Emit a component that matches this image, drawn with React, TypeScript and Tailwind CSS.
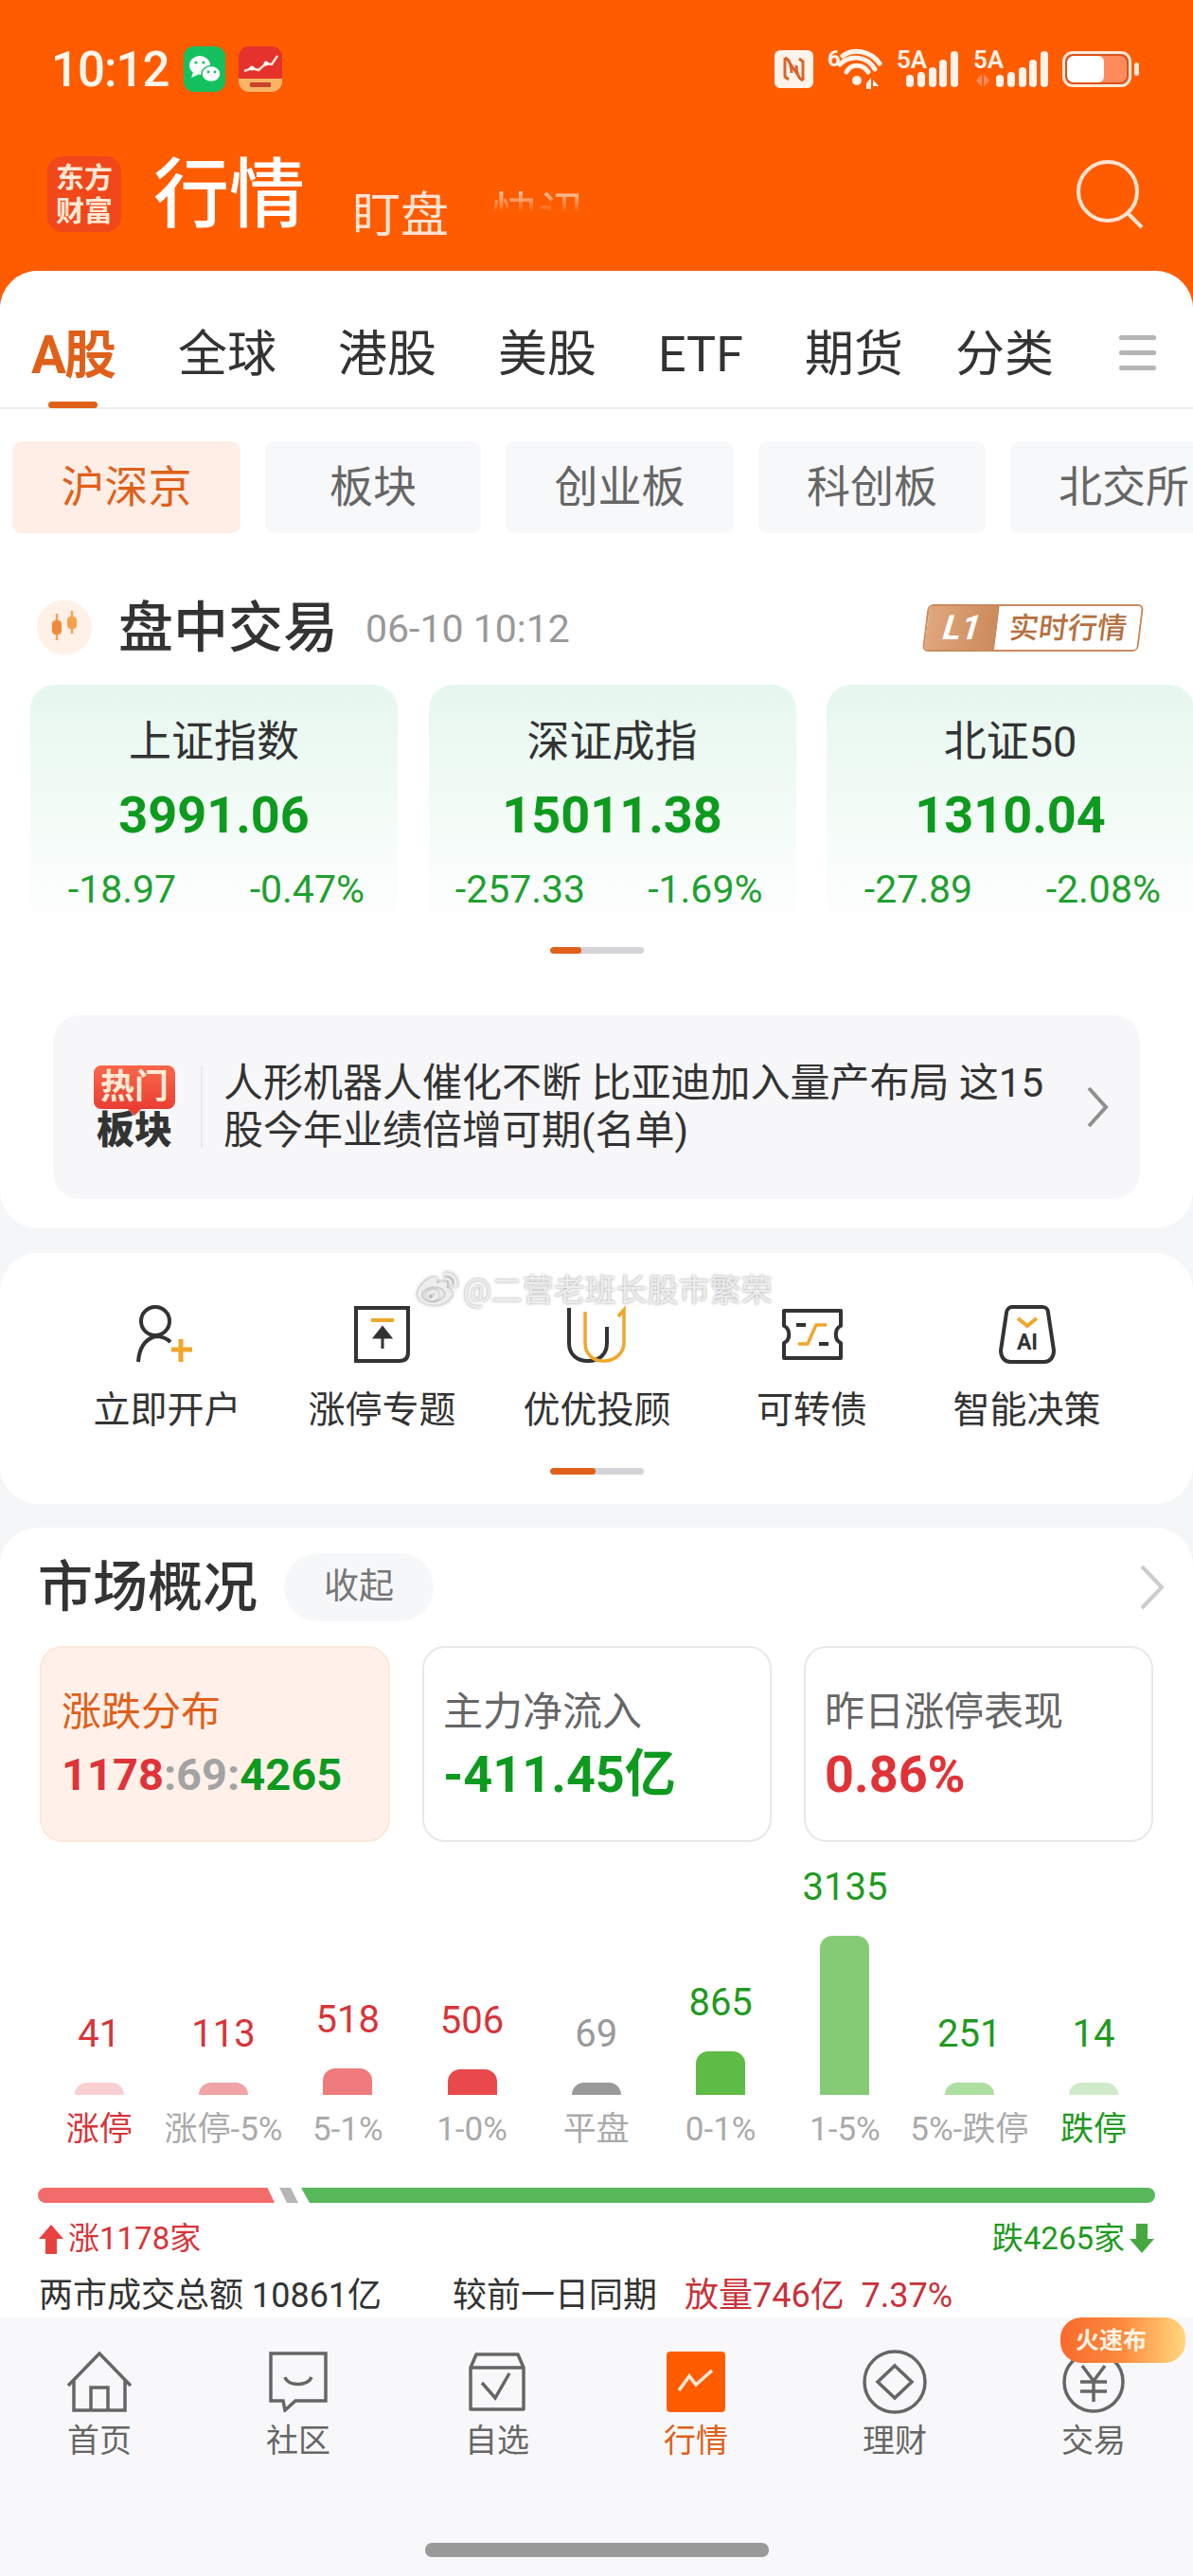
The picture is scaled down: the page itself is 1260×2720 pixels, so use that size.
import { FaWeibo } from 'react-icons/fa';

const tabs = ['全球', '港股', '美股', 'ETF', '期货'];

const chips = [
  { label: '板块', w: 'w-[228px]' },
  { label: '创业板', w: 'w-[241px]' },
  { label: '科创板', w: 'w-[240px]' },
  { label: '北交所', w: 'w-[240px]' },
];

const indices = [
  { name: '上证指数', value: '3991.06', diff: '-18.97', pct: '-0.47%' },
  { name: '深证成指', value: '15011.38', diff: '-257.33', pct: '-1.69%' },
  { name: '北证50', value: '1310.04', diff: '-27.89', pct: '-2.08%' },
];

const chart = [
  { n: '41', label: '涨停', h: 'h-[13px]', bar: 'bg-[#F9D0D2]', numC: 'text-[#D8343A]', labelC: 'text-[#D8343A]' },
  { n: '113', label: '涨停-5%', h: 'h-[13px]', bar: 'bg-[#F0A4A6]', numC: 'text-[#D8343A]', labelC: 'text-[#AAAAAA]' },
  { n: '518', label: '5-1%', h: 'h-[28px]', bar: 'bg-[#EF7B7E]', numC: 'text-[#D8343A]', labelC: 'text-[#AAAAAA]' },
  { n: '506', label: '1-0%', h: 'h-[27px]', bar: 'bg-[#E84A4C]', numC: 'text-[#D8343A]', labelC: 'text-[#AAAAAA]' },
  { n: '69', label: '平盘', h: 'h-[13px]', bar: 'bg-[#999999]', numC: 'text-[#999999]', labelC: 'text-[#AAAAAA]' },
  { n: '865', label: '0-1%', h: 'h-[46px]', bar: 'bg-[#5DBB46]', numC: 'text-[#1F9A1F]', labelC: 'text-[#AAAAAA]' },
  { n: '3135', label: '1-5%', h: 'h-[168px]', bar: 'bg-[#85CB76]', numC: 'text-[#1F9A1F]', labelC: 'text-[#AAAAAA]' },
  { n: '251', label: '5%-跌停', h: 'h-[13px]', bar: 'bg-[#AEDFA2]', numC: 'text-[#1F9A1F]', labelC: 'text-[#AAAAAA]' },
  { n: '14', label: '跌停', h: 'h-[13px]', bar: 'bg-[#D0EBC9]', numC: 'text-[#1F9A1F]', labelC: 'text-[#1F9A1F]' },
];

function Signal({ faded }: { faded?: boolean }) {
  const dx = faded ? 14 : 0;
  return (
    <svg className="overflow-visible" width={faded ? 79 : 65} height="40" viewBox={`0 0 ${faded ? 79 : 65} 40`}>
      <text x="0" y="19" fontSize="26" fontWeight="600" fill="#FFF3EA" fontFamily="Roboto, sans-serif">5A</text>
      {faded && <path d="M3 32l6-7v14zM11 25l6 7-6 7z" fill="#FF8A5C" />}
      <g fill="#FFF3EA" transform={`translate(${dx} 0)`}>
        <rect x="10" y="26" width="8" height="13" rx="4" />
        <rect x="22" y="23" width="8" height="16" rx="4" />
        <rect x="34" y="18" width="8" height="21" rx="4" />
        <rect x="45" y="10" width="8" height="29" rx="4" />
        <rect x="57" y="1" width="8" height="38" rx="4" />
      </g>
    </svg>
  );
}

function StatusBar() {
  return (
    <div className="h-[146px] pl-[54px] pr-[57px] flex items-center">
      <span className="text-[51px] font-medium text-[#FFF6EE] tracking-[-1px] leading-none">10:12</span>
      <svg className="ml-[16px]" width="44" height="48" viewBox="0 0 44 48">
        <rect width="44" height="48" rx="11" fill="#15C15F" />
        <ellipse cx="17" cy="20" rx="11" ry="10" fill="#fff" />
        <path d="M10 27l-2 6 7-3z" fill="#fff" />
        <ellipse cx="29" cy="29" rx="10" ry="8.5" fill="#fff" stroke="#15C15F" strokeWidth="1.5" />
        <circle cx="13" cy="17" r="1.6" fill="#15C15F" />
        <circle cx="21" cy="17" r="1.6" fill="#15C15F" />
        <circle cx="26" cy="27" r="1.4" fill="#15C15F" />
        <circle cx="33" cy="27" r="1.4" fill="#15C15F" />
      </svg>
      <svg className="ml-[14px]" width="46" height="48" viewBox="0 0 46 48">
        <rect width="46" height="48" rx="11" fill="#E5322D" />
        <path d="M0 34h46v3a11 11 0 0 1-11 11H11A11 11 0 0 1 0 37z" fill="#F9B465" />
        <path d="M6 26l8-3 7 2 8-7 6 1 6-9" stroke="#FFE7D2" strokeWidth="2.5" fill="none" />
        <circle cx="14" cy="23" r="2.5" fill="#fff" />
        <circle cx="29" cy="18" r="2.5" fill="#fff" />
        <rect x="12" y="38" width="22" height="5" rx="1" fill="#C8432A" />
      </svg>
      <div className="flex-1" />
      <svg width="41" height="40" viewBox="0 0 41 40">
        <rect width="41" height="40" rx="6" fill="#FFF3EA" />
        <path d="M11 8c5 2 7 8 7 16M30 32c-5-2-7-8-7-16M11 8v20l4 3M30 32V12l-4-3M15 12l11 16" stroke="#D9642B" strokeWidth="3" fill="none" />
      </svg>
      <svg className="ml-[14px] overflow-visible" width="59" height="42" viewBox="0 0 59 42">
        <text x="1" y="18" fontSize="24" fontWeight="700" fill="#FFF3EA" fontFamily="Roboto, sans-serif">6</text>
        <path d="M17 7C28 -1 46 1 56 15M14 16C24 6 42 6 51 21M21 24C26 15 38 15 44 24" stroke="#FFF3EA" strokeWidth="5" fill="none" strokeLinecap="round" />
        <circle cx="32" cy="33" r="5" fill="#FFF3EA" />
        <path d="M42 36l5-6v12h-5zM49 32l6 7h-6z" fill="#FFF3EA" />
      </svg>
      <div className="ml-[15px] flex">
        <Signal />
      </div>
      <div className="ml-[16px] flex">
        <Signal faded />
      </div>
      <div className="ml-[15px] flex items-center">
        <div className="w-[73px] h-[38px] rounded-[11px] border-[3px] border-[#FFE9D8] p-[2px] bg-[#D9541A]">
          <div className="w-full h-full rounded-[7px] bg-[#FF8A5C] overflow-hidden">
            <div className="w-[62%] h-full rounded-[6px] bg-white" />
          </div>
        </div>
        <div className="ml-[3px] w-[5px] h-[14px] rounded-[3px] bg-[#FFE9D8]" />
      </div>
    </div>
  );
}

function Header() {
  return (
    <div className="h-[286px] shrink-0 bg-[#FF5C00]">
      <StatusBar />
      <div className="h-[118px] pl-[50px] pr-[50px] flex items-center">
        <div className="w-[78px] h-[80px] rounded-[16px] bg-[#F0481A] flex flex-col items-center justify-center text-[30px] leading-[35px] font-bold text-[#FFE8D6]">
          <span>东方</span>
          <span>财富</span>
        </div>
        <span className="ml-[34px] mt-[2px] text-[80px] leading-none font-medium text-white">行情</span>
        <span className="ml-[50px] mt-[44px] text-[51px] leading-none text-[#FFE3D2]">盯盘</span>
        <span className="ml-[45px] mt-[44px] text-[50px] leading-none text-[#FFE3D2] [mask-image:linear-gradient(to_bottom,rgba(0,0,0,0.8),transparent_45%)]">快讯</span>
        <div className="flex-1" />
        <svg width="74" height="74" viewBox="0 0 74 74">
          <circle cx="34" cy="34" r="31" stroke="#FFE3D2" strokeWidth="4" fill="none" />
          <path d="M54 56l16 16" stroke="#FFE3D2" strokeWidth="4" fill="none" />
        </svg>
      </div>
    </div>
  );
}

function Tabs() {
  return (
    <div className="h-[146px] border-b-2 border-[#EEEEEE] pl-[33px] pt-[34px] flex items-center text-[52px] leading-none text-[#333333]">
      <span className="relative text-[55px] text-[#E0601A] font-bold tracking-[-2px] w-[90px]">
        A股
        <span className="absolute left-[18px] top-[76px] w-[52px] h-[7px] rounded-[4px] bg-[#E0601A]" />
      </span>
      {tabs.map((t) => (
        <span key={t} className="ml-[65px]">
          {t}
        </span>
      ))}
      <span className="ml-[55px]">分类</span>
      <div className="ml-[69px] -mt-[6px] w-[39px] flex flex-col gap-[11px]">
        <div className="h-[5px] bg-[#B5B5B5] rounded-[2px]" />
        <div className="h-[5px] bg-[#B5B5B5] rounded-[2px]" />
        <div className="h-[5px] bg-[#B5B5B5] rounded-[2px]" />
      </div>
    </div>
  );
}

function Chips() {
  return (
    <div className="mt-[34px] h-[97px] pl-[13px] flex gap-[26px] overflow-hidden text-[46px]">
      <div className="w-[241px] shrink-0 rounded-[10px] bg-[#FFEEE6] text-[#E0601A] flex items-center justify-center">沪深京</div>
      {chips.map((c) => (
        <div key={c.label} className={`${c.w} shrink-0 rounded-[10px] bg-[#F7F8FA] text-[#666666] flex items-center justify-center`}>
          {c.label}
        </div>
      ))}
    </div>
  );
}

function SectionTitle() {
  return (
    <div className="mt-[70px] h-[59px] pl-[39px] pr-[55px] flex items-center">
      <svg width="58" height="59" viewBox="0 0 58 59">
        <circle cx="29" cy="29.5" r="29" fill="#FFF0E8" />
        <path d="M21 15v28M37 12v24" stroke="#F5A14D" strokeWidth="2.5" />
        <rect x="16" y="22" width="10" height="15" rx="4" fill="#F08A3C" />
        <rect x="32" y="18" width="10" height="13" rx="4" fill="#F5A14D" />
      </svg>
      <span className="ml-[28px] text-[58px] leading-none font-medium text-[#333333]">盘中交易</span>
      <span className="ml-[29px] mt-[4px] text-[41px] leading-none text-[#999999]">06-10 10:12</span>
      <div className="flex-1" />
      <div className="w-[228px] h-[50px] flex -skew-x-[7deg] rounded-[6px] border-2 border-[#C98A5E] overflow-hidden">
        <div className="w-[74px] bg-gradient-to-r from-[#E0A77C] to-[#CB8A5C] flex items-center justify-center text-[36px] font-bold italic text-white leading-none">L1</div>
        <div className="flex-1 bg-white flex items-center justify-center text-[31px] font-medium text-[#B5713F] leading-none">实时行情</div>
      </div>
    </div>
  );
}

function IndexCards() {
  return (
    <div className="mt-[31px] pl-[32px] flex gap-[32.5px] overflow-hidden">
      {indices.map((x) => (
        <div key={x.name} className="w-[388px] h-[259px] shrink-0 rounded-[26px] bg-gradient-to-b from-[#E6F7EE] to-white pt-[39px] flex flex-col">
          <div className="text-center text-[45px] leading-[44px] text-[#333333]">{x.name}</div>
          <div className="mt-[28px] text-center text-[54px] leading-[54px] font-bold text-[#0E9A1E]">{x.value}</div>
          <div className="mt-[29px] flex text-[41px] leading-[44px] text-[#1FA030]">
            <span className="w-[194px] text-center">{x.diff}</span>
            <span className="flex-1 text-right pr-[35px]">{x.pct}</span>
          </div>
        </div>
      ))}
    </div>
  );
}

function Pager({ on }: { on: string }) {
  return (
    <div className="w-[99px] h-[7px] mx-auto rounded-[4px] bg-[#D4D4D8] overflow-hidden">
      <div className={`${on} h-full rounded-[4px] bg-[#E0601A]`} />
    </div>
  );
}

function News() {
  return (
    <div className="mt-[65px] mx-[56px] h-[194px] rounded-[28px] bg-[#F7F7F9] pl-[42px] pr-[33px] flex items-center">
      <div className="w-[88px] flex flex-col items-center shrink-0">
        <div className="relative w-[86px] h-[46px] rounded-[8px] bg-gradient-to-b from-[#F9674A] to-[#EA3D34] flex items-center justify-center text-[36px] leading-none font-bold text-[#FFEBD6]">
          热门
          <span className="absolute left-[38px] bottom-[-5px] w-[10px] h-[10px] rotate-45 bg-[#EA3D34]" />
        </div>
        <div className="mt-[4px] text-[40px] leading-[38px] font-black text-[#333333]">板块</div>
      </div>
      <div className="ml-[26px] w-[2px] h-[86px] bg-[#E8E8EC] shrink-0" />
      <div className="ml-[22px] w-[880px] text-[42px] leading-[50px] text-[#333333]">人形机器人催化不断 比亚迪加入量产布局 这15股今年业绩倍增可期(名单)</div>
      <div className="flex-1" />
      <svg width="24" height="44" viewBox="0 0 24 44">
        <path d="M3 2l18 20-18 20" stroke="#8F8F8F" strokeWidth="4" fill="none" />
      </svg>
    </div>
  );
}

const darkStroke = '#333333';
const amber = '#F0A62B';

const shortcuts = [
  {
    label: '立即开户',
    icon: (
      <svg width="72" height="62" viewBox="0 0 72 62">
        <circle cx="23" cy="17" r="15" stroke={darkStroke} strokeWidth="4" fill="none" />
        <path d="M5 60c1-15 8-24 18-27 6 0 12 2 16 6" stroke={darkStroke} strokeWidth="4" fill="none" />
        <path d="M50 36v24M40 47h22" stroke={amber} strokeWidth="5" />
      </svg>
    ),
  },
  {
    label: '涨停专题',
    icon: (
      <svg width="60" height="62" viewBox="0 0 60 62">
        <path d="M2 3h55v47c0 6-3 9-9 9H2z" stroke={darkStroke} strokeWidth="4" fill="none" />
        <path d="M18 16h24" stroke={amber} strokeWidth="4" />
        <path d="M30 46V25M22 34l8-10 8 10z" stroke={darkStroke} strokeWidth="3" fill={darkStroke} />
      </svg>
    ),
  },
  {
    label: '优优投顾',
    icon: (
      <svg width="64" height="62" viewBox="0 0 64 62">
        <path d="M2 3V40C2 52 10 59 22 59C34 59 42 52 42 40V23" stroke={darkStroke} strokeWidth="4" fill="none" />
        <path d="M19 7V40C19 52 28 60 40 59C52 58 60 50 60 40V5L54 12" stroke={amber} strokeWidth="3.5" fill="none" />
      </svg>
    ),
  },
  {
    label: '可转债',
    icon: (
      <svg width="66" height="56" viewBox="0 0 66 56">
        <path d="M3 3h60v16c-7 3-7 15 0 18v16H3V37c7-3 7-15 0-18z" stroke={darkStroke} strokeWidth="4" fill="none" strokeLinejoin="round" />
        <path d="M16 18h10M40 38h10" stroke={darkStroke} strokeWidth="4" />
        <path d="M18 38h10l9-20h11" stroke={amber} strokeWidth="3.5" fill="none" />
      </svg>
    ),
  },
  {
    label: '智能决策',
    icon: (
      <svg width="60" height="62" viewBox="0 0 60 62">
        <path d="M14 2h32c4 0 6 3 6 6l6 40c0 7-4 12-10 12H12C6 60 2 55 2 48l6-40c0-3 3-6 6-6z" stroke={darkStroke} strokeWidth="4" fill="none" />
        <path d="M20 14l10 8 10-8" stroke={amber} strokeWidth="4" fill="none" />
        <text x="30" y="47" fontSize="23" fontWeight="700" textAnchor="middle" fill={darkStroke} fontFamily="Roboto, sans-serif">AI</text>
      </svg>
    ),
  },
];

function Shortcuts() {
  return (
    <div className="relative mt-[26px] h-[265px] shrink-0 rounded-[40px] bg-white pt-[55px]">
      <div className="flex pl-[63px]">
        {shortcuts.map((s) => (
          <div key={s.label} className="w-[227px] flex flex-col items-center">
            <div className="h-[62px] flex items-center justify-center">{s.icon}</div>
            <div className="mt-[27px] text-[39px] leading-[44px] text-[#333333]">{s.label}</div>
          </div>
        ))}
      </div>
      <div className="mt-[39px]">
        <Pager on="w-[48px]" />
      </div>
      <div className="absolute left-[441px] top-[18px] flex items-center gap-[6px] text-[33px] leading-none text-[#EDEDED] [text-shadow:0_0_3px_#9A9A9A]">
        <FaWeibo className="text-[42px] text-[#EDEDED] [filter:drop-shadow(0_0_2px_#8A8A8A)]" />
        <span>@二营老班长股市繁荣</span>
      </div>
    </div>
  );
}

function StatCards() {
  return (
    <div className="mt-[26px] pl-[42px] flex gap-[34px]">
      <div className="w-[370px] h-[207px] rounded-[24px] border-2 border-[#FBE8DD] bg-[#FFF1EA] pl-[21px] pt-[44px]">
        <div className="text-[42px] leading-[48px] text-[#E0601A]">涨跌分布</div>
        <div className="mt-[18px] text-[47px] leading-[48px] font-bold">
          <span className="text-[#E03338]">1178</span>
          <span className="text-[#A3A3A3]">:69:</span>
          <span className="text-[#0E9A1E]">4265</span>
        </div>
      </div>
      <div className="w-[369px] h-[207px] rounded-[24px] border-2 border-[#E8E8E8] bg-white pl-[20px] pt-[44px]">
        <div className="text-[42px] leading-[48px] text-[#666666]">主力净流入</div>
        <div className="mt-[18px] text-[54px] leading-[48px] font-bold text-[#0E9A1E]">-411.45亿</div>
      </div>
      <div className="w-[369px] h-[207px] rounded-[24px] border-2 border-[#E8E8E8] bg-white pl-[20px] pt-[44px]">
        <div className="text-[42px] leading-[48px] text-[#666666]">昨日涨停表现</div>
        <div className="mt-[18px] text-[54px] leading-[48px] font-bold text-[#E03338]">0.86%</div>
      </div>
    </div>
  );
}

function Chart() {
  return (
    <div className="pl-[39px]">
      <div className="mt-[15px] h-[252px] flex items-end">
        {chart.map((c) => (
          <div key={c.label} className="w-[131.3px] flex flex-col items-center">
            <div className={`${c.numC} mb-[31px] text-[40px] leading-[40px]`}>{c.n}</div>
            <div className={`${c.h} ${c.bar} w-[52px] rounded-t-[13px]`} />
          </div>
        ))}
      </div>
      <div className="mt-[17px] flex">
        {chart.map((c) => (
          <div key={c.label} className={`${c.labelC} w-[131.3px] text-center text-[35px] leading-[40px] whitespace-nowrap`}>
            {c.label}
          </div>
        ))}
      </div>
    </div>
  );
}

function Market() {
  return (
    <div className="mt-[25px] flex-1 min-h-0 rounded-t-[40px] bg-white overflow-hidden">
      <div className="mt-[27px] h-[72px] pl-[40px] pr-[30px] flex items-center">
        <span className="text-[58px] leading-none font-medium text-[#333333]">市场概况</span>
        <span className="ml-[28px] w-[158px] h-[72px] rounded-[36px] bg-[#F6F7F9] flex items-center justify-center text-[37px] text-[#777777]">收起</span>
        <div className="flex-1" />
        <svg width="27" height="48" viewBox="0 0 27 48">
          <path d="M3 2l21 22-21 22" stroke="#CCCCCC" strokeWidth="4" fill="none" />
        </svg>
      </div>
      <StatCards />
      <Chart />
      <div className="mt-[41px] mx-[40px] flex h-[16px]">
        <div className="w-[250px] h-full rounded-l-[8px] bg-[#F46B6B] [clip-path:polygon(0_0,97%_0,100%_100%,0_100%)]" />
        <div className="ml-[5px] w-[20px] h-full bg-[#B5B5B5] [clip-path:polygon(0_0,60%_0,100%_100%,40%_100%)]" />
        <div className="ml-[3px] flex-1 h-full rounded-r-[8px] bg-[#57B85A] [clip-path:polygon(0_0,100%_0,100%_100%,1%_100%)]" />
      </div>
      <div className="mt-[18px] mx-[40px] h-[40px] flex items-center text-[33px] leading-[40px]">
        <svg width="28" height="32" viewBox="0 0 28 32">
          <path d="M14 1l13 15h-7v16H8V16H1z" fill="#E8423F" />
        </svg>
        <span className="ml-[4px] text-[#D8343A]">涨1178家</span>
        <div className="flex-1" />
        <span className="text-[#1F9A1F]">跌4265家</span>
        <svg className="ml-[4px]" width="28" height="32" viewBox="0 0 28 32">
          <path d="M14 31L1 16h7V0h12v16h7z" fill="#46A83E" />
        </svg>
      </div>
      <div className="mt-[18px] ml-[41px] h-[44px] flex items-center text-[36px] leading-[44px] whitespace-nowrap text-[#333333]">
        <span className="w-[437px]">两市成交总额 10861亿</span>
        <span className="w-[245px]">较前一日同期</span>
        <span className="text-[#C8323A]">放量746亿&nbsp;&nbsp;7.37%</span>
      </div>
    </div>
  );
}

const navStroke = '#666666';

const navItems = [
  {
    label: '首页',
    icon: (
      <svg width="70" height="64" viewBox="0 0 70 64">
        <path d="M2 36L35 2l33 34M8 30v32h54V30" stroke={navStroke} strokeWidth="3.5" fill="none" />
        <path d="M26 62V38h18v24" stroke={navStroke} strokeWidth="3.5" fill="none" />
      </svg>
    ),
  },
  {
    label: '社区',
    icon: (
      <svg width="62" height="64" viewBox="0 0 62 64">
        <path d="M2 2h58v50H28l-11 10-2-10H2z" stroke={navStroke} strokeWidth="3.5" fill="none" />
        <path d="M17 27c3 10 24 10 28 0" stroke={navStroke} strokeWidth="3.5" fill="none" />
      </svg>
    ),
  },
  {
    label: '自选',
    icon: (
      <svg width="60" height="62" viewBox="0 0 60 62">
        <path d="M2 16L8 2h44l6 14v44H2zM2 16h56" stroke={navStroke} strokeWidth="3.5" fill="none" strokeLinejoin="round" />
        <path d="M14 32l14 16 15-26" stroke={navStroke} strokeWidth="3.5" fill="none" />
      </svg>
    ),
  },
  {
    label: '行情',
    active: true,
    icon: (
      <svg width="62" height="64" viewBox="0 0 62 64">
        <rect width="62" height="64" rx="4" fill="#FF5C00" />
        <path d="M13 41l11-15 7 9 17-15" stroke="#FFE9D8" strokeWidth="3.5" fill="none" />
      </svg>
    ),
  },
  {
    label: '理财',
    icon: (
      <svg width="68" height="68" viewBox="0 0 68 68">
        <circle cx="34" cy="34" r="32" stroke={navStroke} strokeWidth="3.5" fill="none" />
        <path d="M34 17l18 17-18 17-18-17z" stroke={navStroke} strokeWidth="3.5" fill="none" />
      </svg>
    ),
  },
  {
    label: '交易',
    icon: (
      <svg width="66" height="66" viewBox="0 0 66 66">
        <circle cx="33" cy="33" r="31" stroke={navStroke} strokeWidth="3.5" fill="none" />
        <path d="M21 16l12 16 12-16M19 33h28M19 43h28M33 32v22" stroke={navStroke} strokeWidth="3.5" fill="none" />
      </svg>
    ),
  },
];

function BottomNav() {
  return (
    <div className="relative h-[273px] shrink-0 bg-[#F8F8FA] pt-[36px]">
      <div className="flex">
        {navItems.map((n) => (
          <div key={n.label} className="w-[210px] flex flex-col items-center">
            <div className="h-[64px] flex items-center justify-center">{n.icon}</div>
            <div className={`mt-[10px] text-[34px] leading-[40px] ${n.active ? 'text-[#E0601A]' : 'text-[#666666]'}`}>{n.label}</div>
          </div>
        ))}
      </div>
      <div className="mt-[88px] mx-auto w-[363px] h-[15px] rounded-[7px] bg-[#999999]" />
      <div className="absolute left-[1120px] top-0 w-[132px] h-[48px] rounded-[22px] bg-gradient-to-r from-[#FA6A2C] via-[#FB8B3F] to-[#FFD77E] pl-[16px] flex items-center text-[25px] leading-none font-bold text-[#FFF3E6]">
        火速布
      </div>
    </div>
  );
}

export default function App() {
  return (
    <div className="w-[1260px] h-[2720px] flex flex-col overflow-hidden bg-[#F5F6F8] font-['Roboto','Noto_Sans_CJK_SC',sans-serif]">
      <Header />
      <div className="flex-1 min-h-0 flex flex-col bg-[#FF5C00]">
        <div className="flex-1 min-h-0 flex flex-col rounded-t-[40px] bg-[#F5F6F8]">
          <div className="h-[1011px] shrink-0 rounded-[40px] bg-white overflow-hidden">
            <Tabs />
            <Chips />
            <SectionTitle />
            <IndexCards />
            <div className="mt-[18px]">
              <Pager on="w-[33px]" />
            </div>
            <News />
          </div>
          <Shortcuts />
          <Market />
        </div>
      </div>
      <BottomNav />
    </div>
  );
}
